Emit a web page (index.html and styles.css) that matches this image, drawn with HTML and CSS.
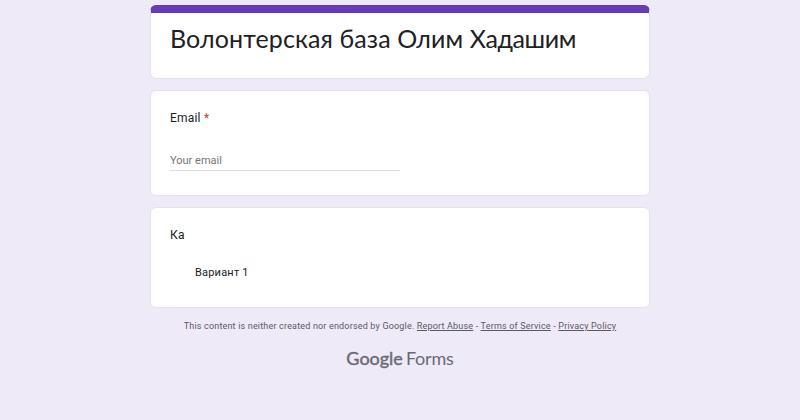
FILE: index.html
```html
<!DOCTYPE html>
<html lang="ru">
<head>
<meta charset="utf-8">
<title>Волонтерская база Олим Хадашим</title>
<link rel="stylesheet" href="styles.css">
</head>
<body>
<main class="form">
  <header class="card card-title"><h1 class="title">Волонтерская база Олим <span class="title-end">Хадашим</span></h1></header>
  <section class="card card-email">
    <h2 class="question">Email <span class="required">*</span></h2>
    <div class="field">Your email</div>
  </section>
  <section class="card card-choice">
    <h2 class="question">Ка</h2>
    <div class="option">Вариант 1</div>
  </section>
  <footer class="footer">
    <p class="legal">This content is neither created nor endorsed by Google. <a>Report Abuse</a> - <a>Terms of Service</a> - <a>Privacy Policy</a></p>
    <div class="brand"><span class="google">Google</span><span class="forms">Forms</span></div>
  </footer>
</main>
</body>
</html>
```
FILE: styles.css
```css
* { box-sizing: border-box; }
body { margin: 0; height: 420px; overflow: hidden; background: #eeeaf8; font-family: Roboto, sans-serif; color: #202124; }
.form { width: 500px; margin: 0 auto; padding-top: 5px; display: flex; flex-direction: column; gap: 11px; }
.card { background: #fff; border: 1px solid #e4e0ee; border-radius: 6px; padding: 0 19px; }
.card-title { height: 74px; border-top: 8px solid #673ab7; }
.card-email { height: 106px; }
.card-choice { height: 101px; }
.title { margin: 8px 0 0; font-family: Lato, Roboto, sans-serif; font-size: 25px; line-height: 34px; font-weight: 400; letter-spacing: .12px; white-space: nowrap; }
.title-end { letter-spacing: -.4px; }
.question { margin: 18px 0 0; font-size: 12px; line-height: 18px; font-weight: 400; letter-spacing: .2px; }
.required { color: #d93025; }
.field { width: 230px; height: 20px; margin-top: 24px; border-bottom: 1px solid #dcdfe1; font-size: 11px; line-height: 20px; color: #70757a; }
.option { margin: 20px 0 0 25px; font-size: 11px; line-height: 18px; letter-spacing: .2px; }
.footer { text-align: center; }
.legal { margin: 0; font-size: 9px; line-height: 14px; letter-spacing: .18px; color: #5b5a61; white-space: nowrap; }
.legal a { text-decoration: underline; }
.brand { display: flex; justify-content: center; gap: 3px; margin-top: 13px; font-family: Lato, Roboto, sans-serif; font-size: 18px; line-height: 24px; color: #6b6972; }
.google { -webkit-text-stroke: .4px #6b6972; }
.forms { letter-spacing: -.2px; }
```
